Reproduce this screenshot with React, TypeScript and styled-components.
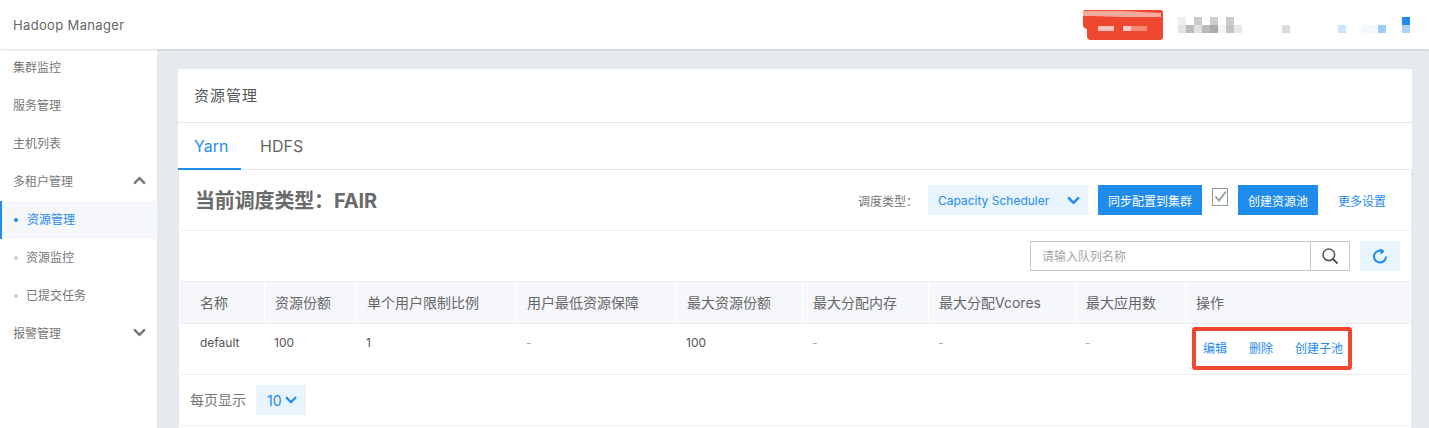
import styled, { createGlobalStyle } from "styled-components";

const blue = "#1f8ceb";
const paleBlue = "#e8f4fe";
const line = "#eceef4";
const strongLine = "#e6e9ee";

const GlobalStyle = createGlobalStyle`
  html, body {
    margin: 0;
    height: 100%;
    overflow: hidden;
  }
  body {
    font-family: Inter, "Noto Sans CJK SC", sans-serif;
    color: #666;
  }
  * {
    box-sizing: border-box;
  }
`;

const Page = styled.div`
  height: 428px;
  display: flex;
  flex-direction: column;
  background: #e6e9ee;
`;

const Header = styled.header`
  position: relative;
  z-index: 1;
  flex: none;
  height: 49px;
  display: flex;
  align-items: center;
  justify-content: space-between;
  padding: 0 19px 0 13px;
  background: #fff;
  box-shadow: 0 1px 2px rgba(0, 0, 0, 0.14);
`;

const Brand = styled.div`
  font-size: 13px;
  letter-spacing: 0.35px;
  color: #666;
`;

const UserArea = styled.div`
  display: flex;
  align-items: center;
  gap: 15px;
`;

const Body = styled.div`
  flex: 1;
  min-height: 0;
  display: flex;
`;

const Sidebar = styled.nav`
  flex: none;
  width: 157px;
  background: #fff;
`;

const NavItem = styled.div<{ $active?: boolean; $sub?: boolean }>`
  height: 38px;
  display: flex;
  align-items: center;
  justify-content: space-between;
  padding: 0 10px 3px ${(p) => (p.$sub ? "26px" : "13px")};
  position: relative;
  font-size: 12px;
  color: ${(p) => (p.$active ? blue : "#777")};
  background: ${(p) => (p.$active ? "#f5f7fb" : "transparent")};
  border-left: ${(p) => (p.$active ? `2px solid ${blue}` : "none")};
  ${(p) => p.$active && "padding-left: 25px;"}
`;

const Dot = styled.i<{ $active?: boolean }>`
  position: absolute;
  left: ${(p) => (p.$active ? "12px" : "14px")};
  top: 17px;
  width: 4px;
  height: 4px;
  border-radius: 50%;
  background: ${(p) => (p.$active ? blue : "#d0d0d0")};
`;

const Main = styled.main`
  flex: 1;
  min-width: 0;
  padding: 20px 17px 0 21px;
`;

const Card = styled.section`
  height: 100%;
  display: flex;
  flex-direction: column;
`;

const CardTitle = styled.h2`
  margin: 0;
  flex: none;
  height: 54px;
  display: flex;
  align-items: center;
  padding: 0 0 2px 16px;
  font-size: 15px;
  font-weight: 400;
  letter-spacing: 1px;
  color: #555;
  background: #fff;
  border-bottom: 1px solid ${strongLine};
`;

const Tabs = styled.div`
  flex: none;
  height: 47px;
  display: flex;
  background: #fff;
  border-bottom: 1px solid ${strongLine};
`;

const Tab = styled.div<{ $active?: boolean }>`
  height: 47px;
  width: ${(p) => (p.$active ? "63px" : "auto")};
  padding: 0 ${(p) => (p.$active ? "16px" : "19px")};
  display: flex;
  align-items: center;
  font-size: 16px;
  color: ${(p) => (p.$active ? blue : "#666")};
  border-bottom: 2px solid ${(p) => (p.$active ? blue : "transparent")};
`;

const Panel = styled.div`
  flex: 1;
  margin: 0 1px;
  padding: 0 1px;
  background: #fff;
`;

const TitleBar = styled.div`
  height: 61px;
  display: flex;
  align-items: center;
  padding: 0 14px 0 15px;
  border-bottom: 1px solid ${line};
`;

const SchedulerTitle = styled.h3`
  margin: 0 auto 2px 0;
  font-size: 20px;
  font-weight: 700;
  letter-spacing: -0.15px;
  color: #6a6a6a;
`;

const FieldLabel = styled.span`
  font-size: 12px;
  color: #777;
  margin-right: 10px;
`;

const SelectBox = styled.div<{ $wide?: boolean }>`
  height: 30px;
  width: ${(p) => (p.$wide ? "160px" : "50px")};
  display: flex;
  align-items: center;
  justify-content: space-between;
  padding: ${(p) => (p.$wide ? "0 7px 0 10px" : "0 8px 0 11px")};
  background: ${paleBlue};
  color: ${blue};
  font-size: ${(p) => (p.$wide ? "12px" : "14px")};
`;

const PrimaryButton = styled.button`
  height: 30px;
  padding: 0;
  border: 0;
  background: ${blue};
  color: #fff;
  font: inherit;
  font-size: 12px;
`;

const SyncButton = styled(PrimaryButton)`
  width: 104px;
  margin-left: 10px;
`;

const CreateButton = styled(PrimaryButton)`
  width: 80px;
`;

const CheckMark = styled.svg`
  display: block;
  margin: 0 10px;
  position: relative;
  top: -3px;
`;

const TextLink = styled.a`
  font-size: 12px;
  color: ${blue};
`;

const MoreLink = styled(TextLink)`
  margin-left: 20px;
  margin-right: 10px;
`;

const Toolbar = styled.div`
  height: 50px;
  display: flex;
  align-items: center;
  justify-content: flex-end;
  gap: 10px;
  padding: 0 10px;
`;

const SearchGroup = styled.div`
  width: 320px;
  height: 30px;
  display: flex;
  border: 1px solid #c8c8c8;
`;

const SearchInput = styled.input`
  flex: 1;
  min-width: 0;
  border: 0;
  outline: 0;
  padding: 0 11px;
  font: inherit;
  font-size: 12px;
  &::placeholder {
    color: #a5a5a5;
    opacity: 1;
  }
`;

const SearchButton = styled.div`
  flex: none;
  width: 39px;
  display: flex;
  align-items: center;
  justify-content: center;
  border-left: 1px solid #c8c8c8;
  color: #555;
`;

const RefreshButton = styled.div`
  width: 40px;
  height: 30px;
  display: flex;
  align-items: center;
  justify-content: center;
  background: ${paleBlue};
  color: ${blue};
`;

const Table = styled.table`
  width: 100%;
  table-layout: fixed;
  border-collapse: separate;
  border-spacing: 0;
`;

const Th = styled.th`
  height: 43px;
  padding: 0 0 2px 10px;
  text-align: left;
  font-size: 14px;
  font-weight: 400;
  color: #666;
  background: #f5f7fb;
  border-top: 1px solid ${line};
  border-bottom: 1px solid ${line};
  border-left: 1px solid #fff;
  &:first-child {
    padding-left: 20px;
    border-left: 0;
  }
`;

const Td = styled.td`
  height: 51px;
  padding: 11px 0 0 10px;
  vertical-align: top;
  font-size: 12px;
  line-height: 16px;
  color: #555;
  border-bottom: 1px solid ${line};
  &:first-child {
    padding-left: 20px;
  }
`;

const EmptyValue = styled.span`
  color: #aaa;
`;

const ActionCell = styled(Td)`
  padding: 3px 0 0 7px;
`;

const ActionBox = styled.div`
  width: 160px;
  height: 43px;
  display: flex;
  align-items: center;
  gap: 22px;
  padding-left: 7px;
  border: 4px solid #ef4730;
  border-radius: 3px;
`;

const Pager = styled.div`
  height: 51px;
  display: flex;
  align-items: center;
  gap: 10px;
  padding-left: 10px;
  font-size: 14px;
  color: #777;
  border-bottom: 1px solid ${line};
`;

const PagerLabel = styled.span`
  padding-bottom: 3px;
`;

const Chevron = ({ up, size = 16, weight = 2.6 }: { up?: boolean; size?: number; weight?: number }) => (
  <svg width={size} height={size} viewBox="0 0 16 16" fill="none" stroke="currentColor" strokeWidth={weight} strokeLinecap="round" strokeLinejoin="round">
    <path d={up ? "M3 10.5 8 5.5 13 10.5" : "M3 5.5 8 10.5 13 5.5"} />
  </svg>
);

// the account name in the top bar is masked in the screenshot
const RedMask = () => (
  <svg width="80" height="30" viewBox="0 0 80 30">
    <path d="M2 0H78Q80 0 80 3V27Q80 30 77 30H8Q4 30 4 26V19Q0 18 0 15V3Q0 0 2 0Z" fill="#ef4730" />
    <path d="M2 1H40L78 3V7H40L8 6L0 6V3Q0 1 2 1Z" fill="#f7a99c" />
    <rect x="15" y="16" width="16" height="5" fill="#f8c2b8" />
    <rect x="40" y="16" width="8" height="5" fill="#f9cdc5" />
    <rect x="48" y="16" width="16" height="5" fill="#f48a78" />
  </svg>
);

const mosaic: [number, number, number, string][] = [
  [0, 0, 1, "#eeeeee"], [2, 0, 1, "#cccccc"], [4, 0, 1, "#cfcfcf"], [6, 0, 1, "#cccccc"],
  [0, 1, 1, "#e3e3e3"], [1, 1, 1, "#bbbbbb"], [2, 1, 1, "#e0e0e0"], [3, 1, 1, "#bbbbbb"],
  [4, 1, 1, "#aaaaaa"], [5, 1, 1, "#f4f4f4"], [6, 1, 1, "#c4c4c4"], [7, 1, 1, "#e8e8e8"],
  [13, 1, 1, "#dddddd"], [20, 1, 1, "#cfe5fb"], [23, 1, 2, "#f3f8fe"], [25, 1, 1, "#9fcbf7"],
  [28, 0, 1, "#1f8ceb"], [28, 1, 1, "#add2f9"],
];

const UserMosaic = () => (
  <svg width="232" height="16" viewBox="0 0 232 16" shapeRendering="crispEdges">
    {mosaic.map(([x, y, w, c], i) => (
      <rect key={i} x={x * 8} y={y * 8} width={w * 8} height="8" fill={c} />
    ))}
  </svg>
);

const columns = [
  { title: "名称", width: 84 },
  { title: "资源份额", width: 92 },
  { title: "单个用户限制比例", width: 160 },
  { title: "用户最低资源保障", width: 160 },
  { title: "最大资源份额", width: 126 },
  { title: "最大分配内存", width: 126 },
  { title: "最大分配Vcores", width: 147 },
  { title: "最大应用数", width: 110 },
  { title: "操作", width: 225 },
];

export default function App() {
  return (
    <Page>
      <GlobalStyle />
      <Header>
        <Brand>Hadoop Manager</Brand>
        <UserArea>
          <RedMask />
          <UserMosaic />
        </UserArea>
      </Header>
      <Body>
        <Sidebar>
          <NavItem>集群监控</NavItem>
          <NavItem>服务管理</NavItem>
          <NavItem>主机列表</NavItem>
          <NavItem>
            多租户管理
            <Chevron up size={15} />
          </NavItem>
          <NavItem $sub $active>
            <Dot $active />
            资源管理
          </NavItem>
          <NavItem $sub>
            <Dot />
            资源监控
          </NavItem>
          <NavItem $sub>
            <Dot />
            已提交任务
          </NavItem>
          <NavItem>
            报警管理
            <Chevron size={15} />
          </NavItem>
        </Sidebar>
        <Main>
          <Card>
            <CardTitle>资源管理</CardTitle>
            <Tabs>
              <Tab $active>Yarn</Tab>
              <Tab>HDFS</Tab>
            </Tabs>
            <Panel>
              <TitleBar>
                <SchedulerTitle>当前调度类型：FAIR</SchedulerTitle>
                <FieldLabel>调度类型：</FieldLabel>
                <SelectBox $wide>
                  Capacity Scheduler
                  <Chevron size={15} />
                </SelectBox>
                <SyncButton>同步配置到集群</SyncButton>
                <CheckMark width="16" height="18" viewBox="0 0 16 18" fill="none">
                  <rect x="0.5" y="0.5" width="15" height="17" stroke="#999" />
                  <path d="M3.5 8.5 7 12.5 14 3.5" stroke="#999" strokeWidth="1.8" />
                </CheckMark>
                <CreateButton>创建资源池</CreateButton>
                <MoreLink>更多设置</MoreLink>
              </TitleBar>
              <Toolbar>
                <SearchGroup>
                  <SearchInput placeholder="请输入队列名称" />
                  <SearchButton>
                    <svg width="18" height="18" viewBox="0 0 18 18" fill="none" stroke="currentColor" strokeWidth="1.6" strokeLinecap="round">
                      <circle cx="7.8" cy="7.8" r="5.8" />
                      <path d="M12 12 16 16" strokeWidth="2" />
                    </svg>
                  </SearchButton>
                </SearchGroup>
                <RefreshButton>
                  <svg width="16" height="16" viewBox="0 0 16 16" fill="none" stroke="currentColor" strokeWidth="2">
                    <path d="M11.5 3.6A6 6 0 1 0 14 8.5" />
                    <path d="M8.2 0.6 12.6 3.4 8.6 6.4Z" fill="currentColor" stroke="none" />
                  </svg>
                </RefreshButton>
              </Toolbar>
              <Table>
                <colgroup>
                  {columns.map((c) => (
                    <col key={c.title} width={c.width} />
                  ))}
                </colgroup>
                <thead>
                  <tr>
                    {columns.map((c) => (
                      <Th key={c.title}>{c.title}</Th>
                    ))}
                  </tr>
                </thead>
                <tbody>
                  <tr>
                    <Td>default</Td>
                    <Td>100</Td>
                    <Td>1</Td>
                    <Td><EmptyValue>-</EmptyValue></Td>
                    <Td>100</Td>
                    <Td><EmptyValue>-</EmptyValue></Td>
                    <Td><EmptyValue>-</EmptyValue></Td>
                    <Td><EmptyValue>-</EmptyValue></Td>
                    <ActionCell>
                      <ActionBox>
                        <TextLink>编辑</TextLink>
                        <TextLink>删除</TextLink>
                        <TextLink>创建子池</TextLink>
                      </ActionBox>
                    </ActionCell>
                  </tr>
                </tbody>
              </Table>
              <Pager>
                <PagerLabel>每页显示</PagerLabel>
                <SelectBox>
                  10
                  <Chevron size={14} />
                </SelectBox>
              </Pager>
            </Panel>
          </Card>
        </Main>
      </Body>
    </Page>
  );
}
